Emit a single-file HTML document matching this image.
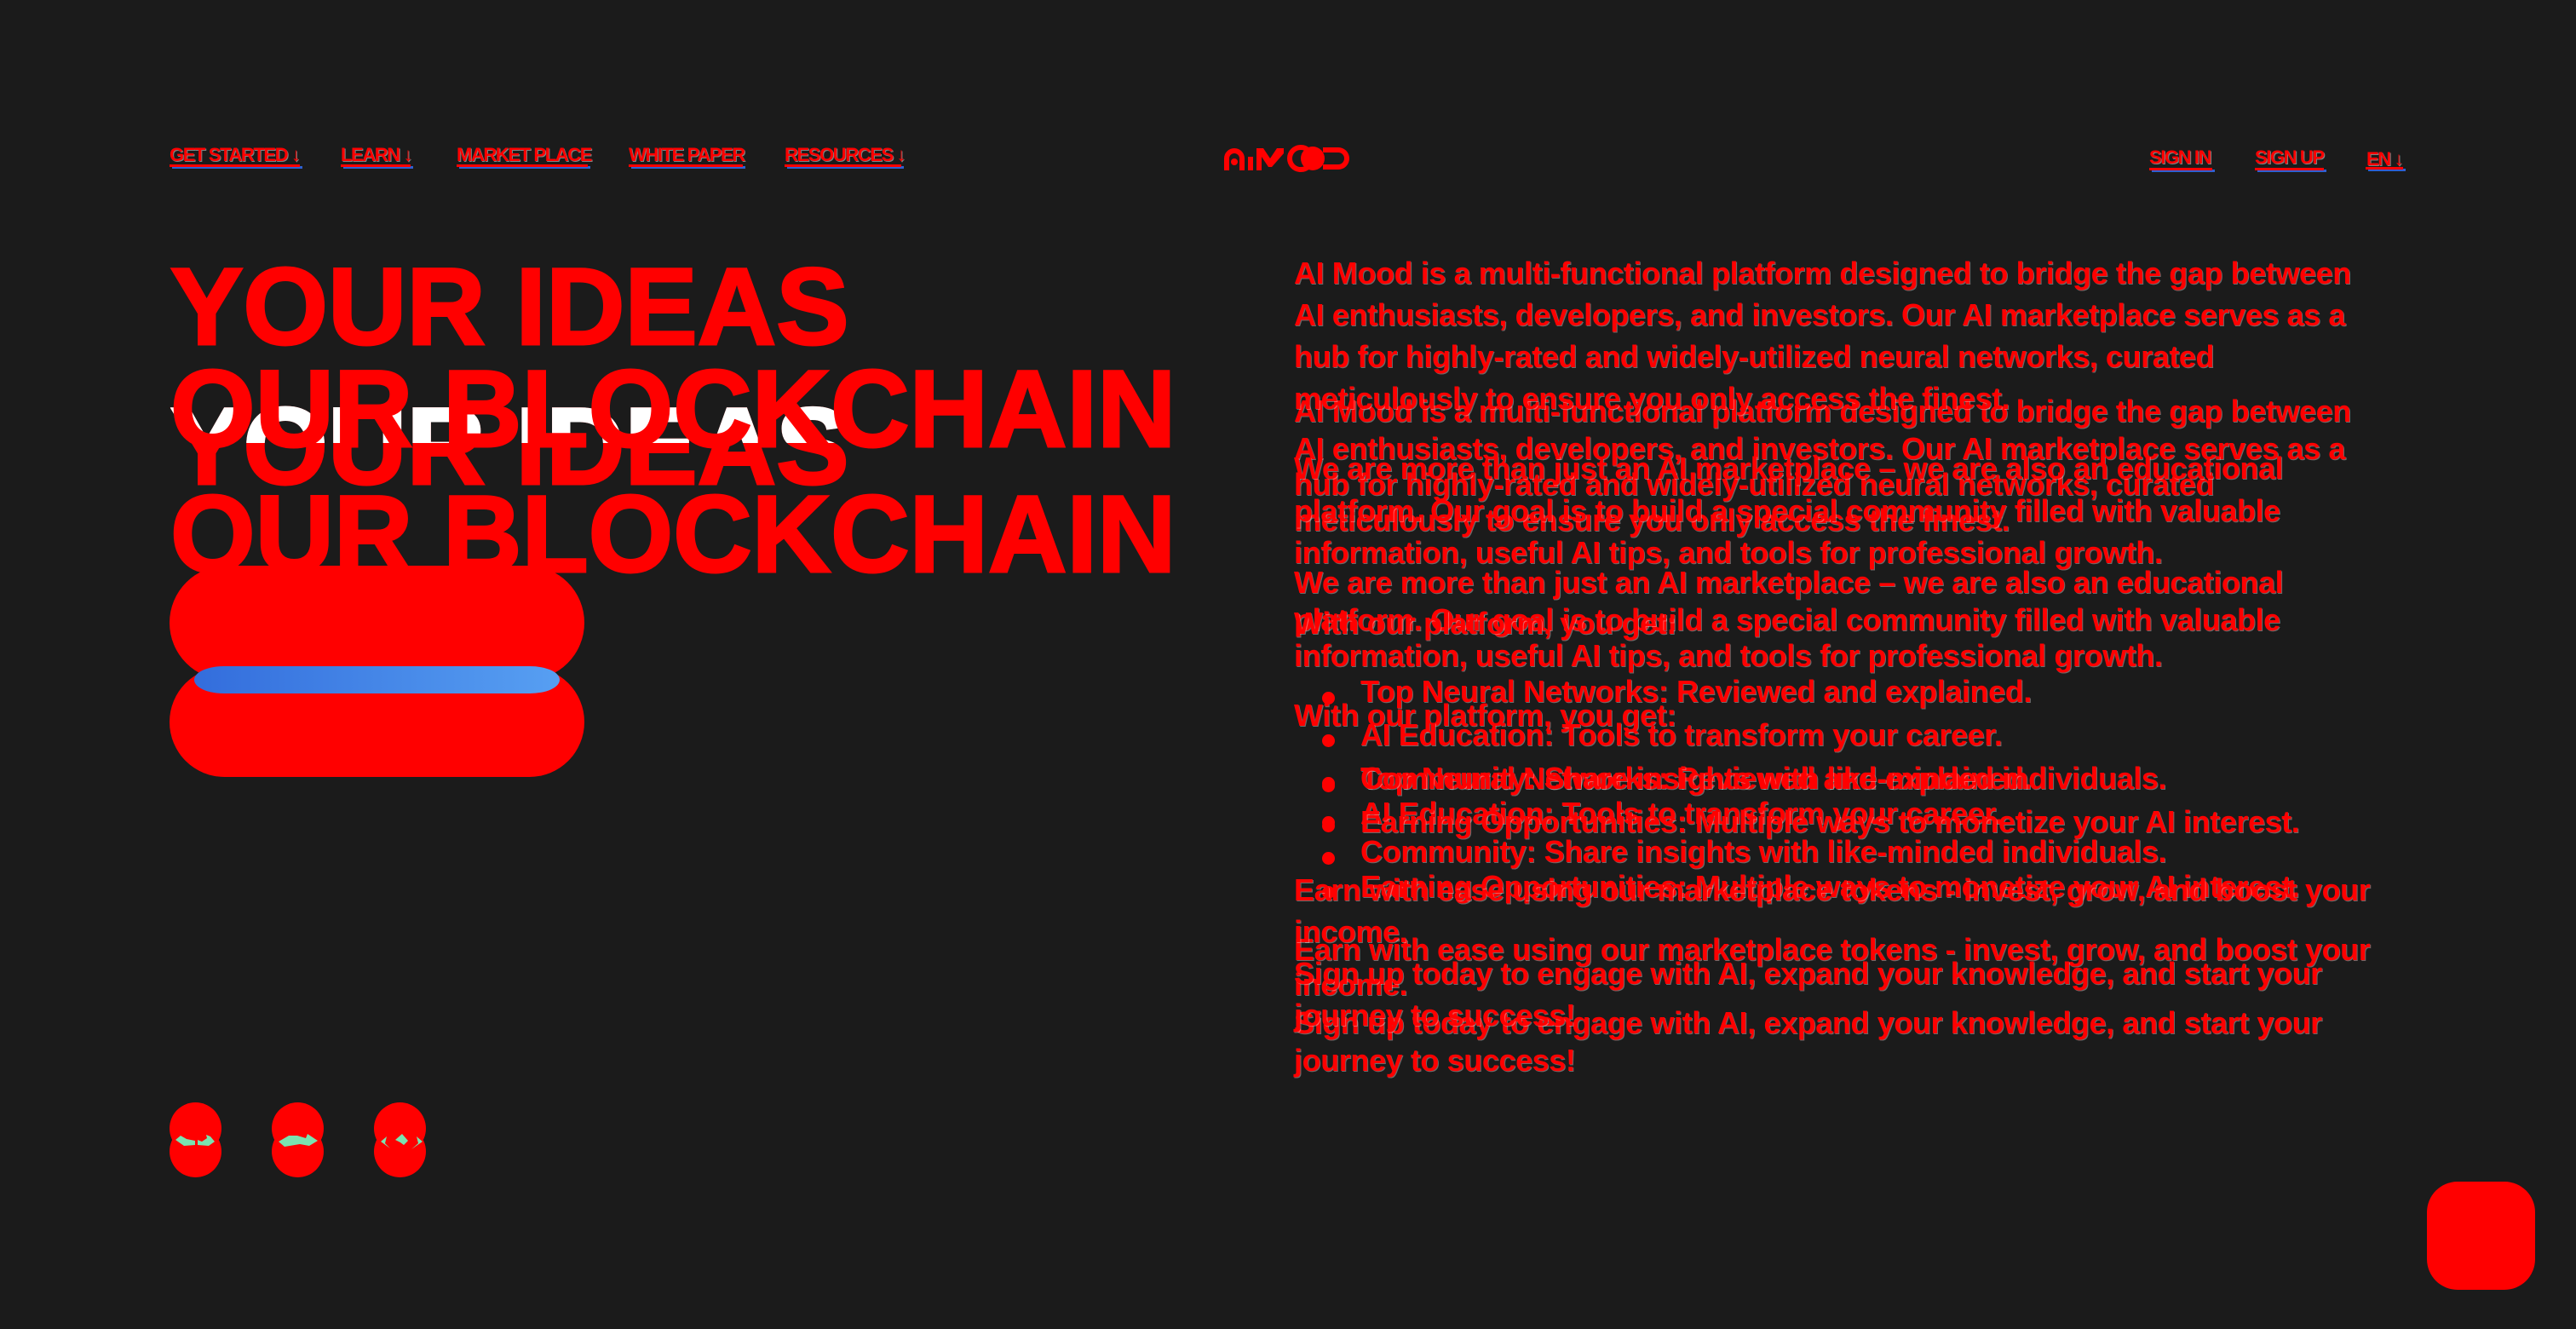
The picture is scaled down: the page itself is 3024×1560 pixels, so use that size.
<!DOCTYPE html>
<html><head><meta charset="utf-8"><style>
html,body{margin:0;padding:0;background:#1b1b1b;}
body{width:3024px;height:1560px;position:relative;overflow:hidden;font-family:"Liberation Sans",sans-serif;color:#ff0000;}
.a{position:absolute;white-space:nowrap;}
.nav{font-weight:bold;font-size:22px;line-height:22px;letter-spacing:-1.4px;color:#f00;text-shadow:1px 1px 0 rgba(255,255,255,.45);}
.ul{position:absolute;height:3px;background:#f00;box-shadow:3px 2px 0 #2f5fd0;}
.h{font-weight:bold;font-size:128px;line-height:125px;color:#f00;letter-spacing:0px;-webkit-text-stroke:3px currentColor;}
.t{font-size:36px;line-height:34px;font-weight:bold;color:#f00;letter-spacing:-0.4px;text-shadow:1px 1px 0 rgba(255,255,255,.35);}
.dot{position:absolute;width:15px;height:15px;border-radius:50%;background:#f00;}
.c{position:absolute;width:61px;height:61px;border-radius:50%;background:#f00;}
</style></head><body>

<div class="a nav" style="left:199px;top:171px">GET STARTED ↓</div><div class="ul" style="left:199px;top:193px;width:153px"></div>
<div class="a nav" style="left:400px;top:171px">LEARN ↓</div><div class="ul" style="left:400px;top:193px;width:82px"></div>
<div class="a nav" style="left:536px;top:171px">MARKET PLACE</div><div class="ul" style="left:536px;top:193px;width:154px"></div>
<div class="a nav" style="left:738px;top:171px">WHITE PAPER</div><div class="ul" style="left:738px;top:193px;width:134px"></div>
<div class="a nav" style="left:921px;top:171px">RESOURCES ↓</div><div class="ul" style="left:921px;top:193px;width:137px"></div>

<svg class="a" style="left:1435px;top:170px" width="152" height="32" viewBox="0 0 152 32">
<path d="M2 30 V16 A12 12 0 0 1 26 16 V30 H20 V16 A6 6 0 0 0 8 16 V30 Z" fill="#f00"/>
<circle cx="14" cy="20" r="4" fill="#f00"/>
<rect x="30" y="14" width="6" height="16" fill="#f00"/>
<path d="M40 30 V4 H48 L56 16 L64 4 H72 V10 L58 26 H54 L46 14 V30 Z" fill="#f00"/>
<circle cx="92" cy="16" r="13" fill="none" stroke="#f00" stroke-width="6"/>
<circle cx="106" cy="16" r="14" fill="#f00"/>
<path d="M118 3 H136 A13 13 0 0 1 136 29 H118 V23 H136 A7 7 0 0 0 136 9 H118 Z" fill="#f00"/>
</svg>

<div class="a nav" style="left:2523px;top:174px">SIGN IN</div><div class="ul" style="left:2523px;top:197px;width:74px"></div>
<div class="a nav" style="left:2647px;top:174px">SIGN UP</div><div class="ul" style="left:2647px;top:197px;width:81px"></div>
<div class="a nav" style="left:2778px;top:176px">EN ↓</div><div class="ul" style="left:2777px;top:196px;width:44px"></div>

<div class="a h" style="left:200px;top:462px">YOUR IDEAS</div>
<div class="a h" style="left:200px;top:462px;color:#fff;clip-path:inset(0 0 67px 0)">YOUR IDEAS</div>
<div class="a h" style="left:200px;top:565px">OUR BLOCKCHAIN</div>
<div class="a h" style="left:200px;top:298px">YOUR IDEAS</div>
<div class="a h" style="left:200px;top:418px">OUR BLOCKCHAIN</div>

<div class="a" style="left:199px;top:783px;width:487px;height:129px;border-radius:65px;background:#f00"></div>
<div class="a" style="left:199px;top:664px;width:487px;height:134px;border-radius:67px;background:#f00"></div>
<div class="a" style="left:228px;top:782px;width:429px;height:32px;border-radius:70px/32px;background:linear-gradient(90deg,#336ddc,#579ff2)"></div>

<div class="c" style="left:199px;top:1294px"></div><div class="c" style="left:199px;top:1321px"></div>
<div class="c" style="left:319px;top:1294px"></div><div class="c" style="left:319px;top:1321px"></div>
<div class="c" style="left:439px;top:1294px"></div><div class="c" style="left:439px;top:1321px"></div>
<svg class="a" style="left:199px;top:1330px" width="301" height="25">
<path d="M7 8 L13 3 L20 7 L30 9 L30 14 L17 15 Z" fill="#7ae3b0"/>
<path d="M33 8 L38 10 L44 6 L43 2 L48 4 L53 10 L46 15 L33 14 Z" fill="#7ae3b0"/>
<path d="M128 10 L140 3 L150 3 L160 6 L162 1 L174 9 L164 15 L153 13 L135 16 Z" fill="#7ae3b0"/>
<path d="M248 10 L255 4 L253 12 L259 18 Z M290 4 L297 10 L284 19 L292 12 Z" fill="#7ae3b0"/>
<path d="M265 8 L273 1 L280 9 L275 14 L271 11 Z" fill="#7ae3b0"/>
</svg>

<div class="a t" style="left:1519px;top:466px">AI Mood is a multi-functional platform designed to bridge the gap between</div>
<div class="a t" style="left:1519px;top:510px">AI enthusiasts, developers, and investors. Our AI marketplace serves as a</div>
<div class="a t" style="left:1519px;top:552px">hub for highly-rated and widely-utilized neural networks, curated</div>
<div class="a t" style="left:1519px;top:594px">meticulously to ensure you only access the finest.</div>
<div class="a t" style="left:1519px;top:667px">We are more than just an AI marketplace – we are also an educational</div>
<div class="a t" style="left:1519px;top:711px">platform. Our goal is to build a special community filled with valuable</div>
<div class="a t" style="left:1519px;top:753px">information, useful AI tips, and tools for professional growth.</div>
<div class="a t" style="left:1519px;top:823px">With our platform, you get:</div>
<div class="dot" style="left:1552px;top:915px"></div><div class="a t" style="left:1597px;top:897px">Top Neural Networks: Reviewed and explained.</div>
<div class="dot" style="left:1552px;top:958px"></div><div class="a t" style="left:1597px;top:938px">AI Education: Tools to transform your career.</div>
<div class="dot" style="left:1552px;top:1000px"></div><div class="a t" style="left:1597px;top:983px">Community: Share insights with like-minded individuals.</div>
<div class="dot" style="left:1552px;top:1040px"></div><div class="a t" style="left:1597px;top:1024px">Earning Opportunities: Multiple ways to monetize your AI interest.</div>
<div class="a t" style="left:1519px;top:1098px">Earn with ease using our marketplace tokens - invest, grow, and boost your</div>
<div class="a t" style="left:1519px;top:1139px">income.</div>
<div class="a t" style="left:1519px;top:1184px">Sign up today to engage with AI, expand your knowledge, and start your</div>
<div class="a t" style="left:1519px;top:1228px">journey to success!</div>

<div class="a t" style="left:1519px;top:304px">AI Mood is a multi-functional platform designed to bridge the gap between</div>
<div class="a t" style="left:1519px;top:353px">AI enthusiasts, developers, and investors. Our AI marketplace serves as a</div>
<div class="a t" style="left:1519px;top:402px">hub for highly-rated and widely-utilized neural networks, curated</div>
<div class="a t" style="left:1519px;top:451px">meticulously to ensure you only access the finest.</div>
<div class="a t" style="left:1519px;top:533px">We are more than just an AI marketplace – we are also an educational</div>
<div class="a t" style="left:1519px;top:583px">platform. Our goal is to build a special community filled with valuable</div>
<div class="a t" style="left:1519px;top:632px">information, useful AI tips, and tools for professional growth.</div>
<div class="a t" style="left:1519px;top:715px">With our platform, you get:</div>
<div class="dot" style="left:1552px;top:812px"></div><div class="a t" style="left:1597px;top:795px">Top Neural Networks: Reviewed and explained.</div>
<div class="dot" style="left:1552px;top:862px"></div><div class="a t" style="left:1597px;top:846px">AI Education: Tools to transform your career.</div>
<div class="dot" style="left:1552px;top:912px"></div><div class="a t" style="left:1597px;top:897px">Community: Share insights with like-minded individuals.</div>
<div class="dot" style="left:1552px;top:962px"></div><div class="a t" style="left:1597px;top:948px">Earning Opportunities: Multiple ways to monetize your AI interest.</div>
<div class="a t" style="left:1519px;top:1028px">Earn with ease using our marketplace tokens - invest, grow, and boost your</div>
<div class="a t" style="left:1519px;top:1077px">income.</div>
<div class="a t" style="left:1519px;top:1126px">Sign up today to engage with AI, expand your knowledge, and start your</div>
<div class="a t" style="left:1519px;top:1175px">journey to success!</div>

<div class="a" style="left:2849px;top:1387px;width:127px;height:127px;border-radius:36px;background:#f00"></div>
</body></html>
